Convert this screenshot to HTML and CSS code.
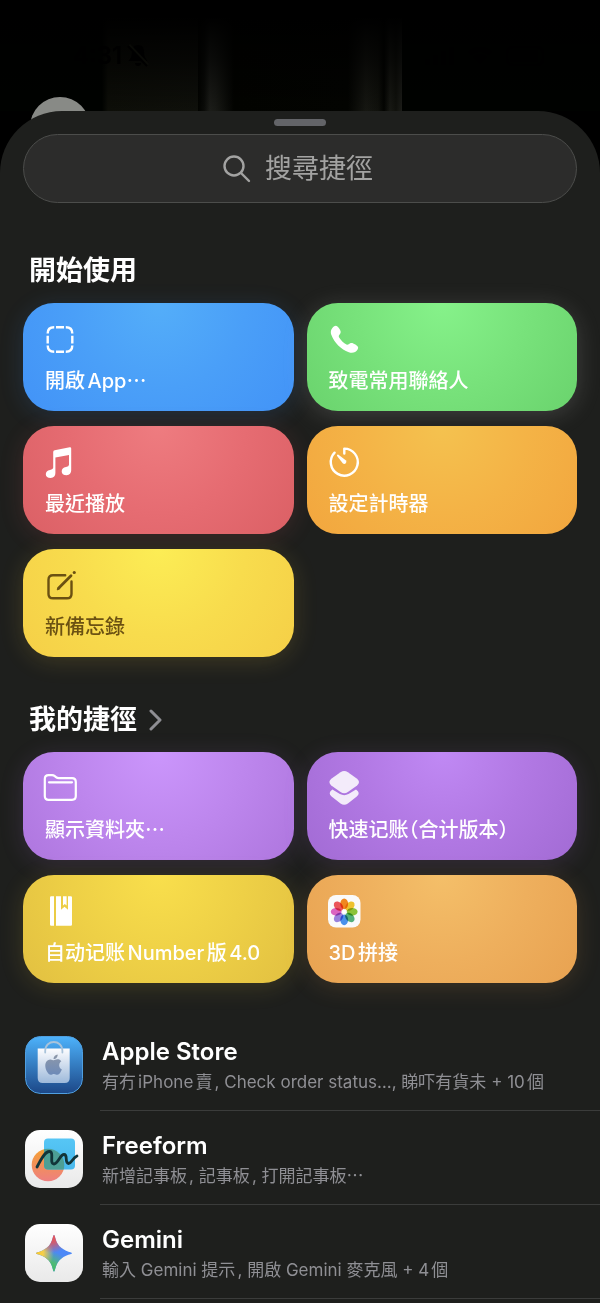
FILE: index.html
```html
<!DOCTYPE html>
<html lang="zh-Hant">
<head>
    <meta charset="UTF-8">
    <meta name="viewport" content="width=device-width, initial-scale=1.0">
    <title>捷徑</title>
    <link rel="stylesheet" href="styles.css">
</head>
<body>
    <div class="backdrop">
        <div class="status-bar">
            <span class="status-time">4:31</span>
            <svg class="bell" viewBox="0 0 22 24" aria-hidden="true">
                <path d="M11 1c-4 0-6 3-6 7 0 5-2 7-3.500 9h19C19 15 17 13 17 8c0-4-2-7-6-7zM8 19h6c0 4-6 4-6 0z"/>
                <path d="M2 1l19 20" fill="none" stroke="#0a0b07" stroke-width="3"/>
                <path d="M1 2l19 20" fill="none" stroke="#000" stroke-width="2"/>
            </svg>
            <svg class="signals" viewBox="0 0 124 20" aria-hidden="true">
                <path d="M0 13h5v6H0zM8 9h5v10H8zM16 5h5v14h-5zM24 1h5v18h-5z"/>
                <path d="M43 6q12-10 24 0l-3 3q-9-7-18 0zM48 11q7-6 14 0l-7 7z"/>
                <rect x="82" y="1" width="36" height="18" rx="6" fill="none" stroke="#000" stroke-width="2"/>
                <rect x="85" y="4" width="28" height="12" rx="3"/>
            </svg>
        </div>
        <div class="avatar"></div>
    </div>

    <main class="sheet">
        <div class="grabber"></div>
        <label class="search">
            <svg viewBox="0 0 28 28" aria-hidden="true">
                <circle cx="11" cy="11" r="9.500"/>
                <path d="M18 18l8 8"/>
            </svg>
            <input type="text" placeholder="搜尋捷徑" aria-label="搜尋捷徑">
        </label>

        <section class="group">
            <h2>開始使用</h2>
            <div class="cards">
                <button class="card blue">
                    <svg viewBox="0 0 32 32" fill="none" stroke="currentColor" stroke-width="2.400" aria-hidden="true">
                        <path d="M11 4.200h8M11 28.800h8M2.700 12.800v7.600M27.300 12.800v7.600"/>
                        <path d="M2.700 10.400C2.700 6 4.600 4.200 9.200 4.200M20.800 4.200c4.600 0 6.500 1.800 6.500 6.200M2.700 22.600c0 4.400 1.900 6.200 6.500 6.200M20.800 28.800c4.600 0 6.500-1.800 6.500-6.200"/>
                    </svg>
                    <span>開啟App<span class="dots">…</span></span>
                </button>
                <button class="card green">
                    <svg viewBox="0 0 32 32" fill="currentColor" aria-hidden="true">
                        <path d="M5.200 3.200C7 1.900 8.600 3 10 5.200c1.600 2.400 2.200 3.700 1.300 5.200-.8 1.400-2.100 2.200-1.300 3.900 1.500 2.700 4.800 6 7.500 7.300 1.500.7 2.300-.6 3.700-1.300 1.500-.8 2.800-.3 5.200 1.300 2.400 1.600 3.600 2.900 2.200 4.900-2 3-5 4.100-8.800 2.700C12 26.300 5.200 19.800 2.400 12 1 8.200 2.400 5.200 5.200 3.200z"/>
                    </svg>
                    <span>致電常用聯絡人</span>
                </button>
                <button class="card red">
                    <svg viewBox="0 0 32 32" fill="currentColor" aria-hidden="true">
                        <path d="M8.200 6q0-1.500 1.500-1.800l15-2.900q1.500-.2 1.500 1.300v21.600q0 4.600-4.600 5-4.900-.1-4.900-3.800 0-3.600 4.300-4.400 3-.5 3-2.200V9L10.400 11.600V27q0 4.500-4.700 5Q.8 31.900.8 28.300q0-3.600 4.200-4.400 3.200-.5 3.200-2.300z"/>
                    </svg>
                    <span>最近播放</span>
                </button>
                <button class="card orange">
                    <svg viewBox="0 0 32 32" aria-hidden="true">
                        <path d="M15.300 7.600V2.600a13.500 13.500 0 1 1-9.700 4.100" fill="none" stroke="currentColor" stroke-width="2.400" stroke-linecap="round" stroke-linejoin="round"/>
                        <path d="M8.300 8.700q.6-.4 1.200 0l7.200 5.500q1.500 1.600.1 3.100-1.500 1.300-3.100-.1L8.100 9.900q-.4-.7.200-1.200z" fill="currentColor"/>
                    </svg>
                    <span>設定計時器</span>
                </button>
                <button class="card yellow">
                    <svg viewBox="0 0 32 32" fill="none" stroke="currentColor" stroke-width="2.400" stroke-linecap="round" aria-hidden="true">
                        <path d="M20.200 6.200H8Q3.500 6.200 3.500 10.700V25Q3.500 29.300 8 29.300H22Q26.500 29.300 26.500 25V12.500"/>
                        <path d="M13.500 19.300L26 6.800" stroke-width="2.800"/>
                        <path d="M12.300 20.600l1.200-2.400 1.100 1.200z" stroke-width="1"/>
                        <path d="M29.200 3.600h.1" stroke-width="3"/>
                    </svg>
                    <span>新備忘錄</span>
                </button>
            </div>
        </section>

        <section class="group">
            <h2>
                <a href="#">我的捷徑
                    <svg class="chevron" viewBox="0 0 14 22" aria-hidden="true"><path d="M2 2l9 9-9 9"/></svg>
                </a>
            </h2>
            <div class="cards">
                <button class="card violet">
                    <svg viewBox="0 0 32 32" fill="none" stroke="currentColor" stroke-width="2.200" stroke-linecap="round" aria-hidden="true">
                        <path d="M-.2 7Q-.2 3.200 3.600 3.200H7q1.600 0 2.800 1l1.200 1q1.200 1 2.800 1H27q3.800 0 3.800 3.800V24q0 3.800-3.800 3.800H3.600Q-.2 27.800-.2 24z"/>
                        <path d="M4 10.300h23"/>
                    </svg>
                    <span>顯示資料夾<span class="dots">…</span></span>
                </button>
                <button class="card purple">
                    <svg viewBox="0 0 32 32" fill="#f3ebfa" aria-hidden="true">
                        <path d="M11.500.3q3.700-2.500 7.400 0l9.200 6.500q3.800 3.300 0 6.600l-9.200 6.500q-3.700 2.500-7.400 0l-9.200-6.500q-3.800-3.300 0-6.600z"/>
                        <path d="M3.400 17.600l7.500 4.500q4.300 2.300 8.600 0l7.500-4.500q5 3.300.8 7l-8.900 6.800q-3.700 2.500-7.400 0l-8.900-6.800q-4.200-3.700.8-7z"/>
                    </svg>
                    <span class="tight" lang="zh-Hans">快速记账（合计版本）</span>
                </button>
                <button class="card gold">
                    <svg viewBox="0 0 32 32" fill="currentColor" aria-hidden="true">
                        <path d="M6.200 1.300H9v29.500H6.200Q5 30.800 5 29.600V2.500q0-1.200 1.200-1.200zM11 1.300h5v13.500l3.500-3 3.500 3V1.300h2.800Q27 1.300 27 2.500v27.100q0 1.200-1.200 1.200H11z"/>
                        <path d="M18 1.300h3.600v9.300l-1.800-1.700L18 10.600z"/>
                    </svg>
                    <span lang="zh-Hans">自动记账Number版4.0</span>
                </button>
                <button class="card apricot">
                    <svg viewBox="0 0 32 32" aria-hidden="true">
                        <rect x="-1" width="32.500" height="32.500" rx="8" fill="#fafafa"/>
                        <g class="petals">
                            <ellipse cx="15.200" cy="8.800" rx="3.900" ry="5.400" fill="#f58a1f"/>
                            <ellipse cx="15.200" cy="8.800" rx="3.900" ry="5.400" fill="#f3c62f" transform="rotate(45 15.200 16.800)"/>
                            <ellipse cx="15.200" cy="8.800" rx="3.900" ry="5.400" fill="#8fc73a" transform="rotate(90 15.200 16.800)"/>
                            <ellipse cx="15.200" cy="8.800" rx="3.900" ry="5.400" fill="#55b37c" transform="rotate(135 15.200 16.800)"/>
                            <ellipse cx="15.200" cy="8.800" rx="3.900" ry="5.400" fill="#4a94f0" transform="rotate(180 15.200 16.800)"/>
                            <ellipse cx="15.200" cy="8.800" rx="3.900" ry="5.400" fill="#9b84e0" transform="rotate(225 15.200 16.800)"/>
                            <ellipse cx="15.200" cy="8.800" rx="3.900" ry="5.400" fill="#e066c4" transform="rotate(270 15.200 16.800)"/>
                            <ellipse cx="15.200" cy="8.800" rx="3.900" ry="5.400" fill="#f0585c" transform="rotate(315 15.200 16.800)"/>
                        </g>
                        <circle cx="15.200" cy="16.800" r="1.800" fill="#fff"/>
                    </svg>
                    <span>3D拼接</span>
                </button>
            </div>
        </section>

        <nav class="apps">
            <a class="app" href="#">
                <svg viewBox="0 0 58 58" aria-hidden="true">
                    <defs>
                        <linearGradient id="store-bg" x2="0" y2="1"><stop stop-color="#4db2fb"/><stop offset="1" stop-color="#1c4787"/></linearGradient>
                        <linearGradient id="store-bag" x2="0" y2="1"><stop stop-color="#fdfdff"/><stop offset="1" stop-color="#9db9da"/></linearGradient>
                        <linearGradient id="store-logo" x2="0" y2="1"><stop stop-color="#8e98a8"/><stop offset="1" stop-color="#6d8ab8"/></linearGradient>
                    </defs>
                    <rect x=".5" y=".5" width="57" height="57" rx="15" fill="url(#store-bg)" stroke="#4f9fe0"/>
                    <path d="M12.700 12.500h32V42q0 5-5 5h-22q-5 0-5-5z" fill="url(#store-bag)"/>
                    <path d="M20.200 16.500V15c0-12 17.200-12 17.200 0v1.500" fill="none" stroke="#a9c3da" stroke-width="1.800" stroke-linecap="round"/>
                    <g transform="translate(18.400 18.400) scale(.85)">
                        <path fill="url(#store-logo)" d="M12.152 6.896c-.948 0-2.415-1.078-3.960-1.040-2.040.027-3.910 1.183-4.961 3.014-2.117 3.675-.546 9.103 1.519 12.090 1.013 1.454 2.208 3.090 3.792 3.039 1.520-.065 2.090-.987 3.935-.987 1.831 0 2.350.987 3.960.948 1.637-.026 2.676-1.480 3.676-2.948 1.156-1.688 1.636-3.325 1.662-3.415-.039-.013-3.182-1.221-3.220-4.857-.026-3.040 2.480-4.494 2.597-4.559-1.429-2.090-3.623-2.324-4.390-2.376-2-.156-3.675 1.090-4.610 1.090zM15.530 3.830c.843-1.012 1.400-2.427 1.245-3.830-1.207.052-2.662.805-3.532 1.818-.780.896-1.454 2.338-1.273 3.714 1.338.104 2.715-.688 3.559-1.701"/>
                    </g>
                </svg>
                <span class="app-text">
                    <strong>Apple Store</strong>
                    <small>有冇iPhone賣, Check order status…, 睇吓有貨未 + 10個</small>
                </span>
            </a>
            <a class="app" href="#">
                <svg viewBox="0 0 58 58" aria-hidden="true">
                    <defs>
                        <linearGradient id="tile" x2="0" y2="1"><stop stop-color="#fff"/><stop offset="1" stop-color="#e9e9e9"/></linearGradient>
                        <linearGradient id="ball" x2="0" y2="1"><stop stop-color="#f5a033"/><stop offset="1" stop-color="#ee7f80"/></linearGradient>
                        <linearGradient id="note" x2="0" y2="1"><stop stop-color="#56c6f5"/><stop offset="1" stop-color="#49b8ec"/></linearGradient>
                        <clipPath id="ball-clip"><circle cx="23" cy="35" r="16.300"/></clipPath>
                    </defs>
                    <rect width="58" height="58" rx="15" fill="url(#tile)"/>
                    <circle cx="23" cy="35" r="16.300" fill="url(#ball)"/>
                    <rect x="19" y="8.500" width="31" height="31" rx="4" fill="url(#note)"/>
                    <rect x="19" y="8.500" width="31" height="31" rx="4" fill="#4d9f95" clip-path="url(#ball-clip)"/>
                    <path d="M12 37c4-8 8-15.500 12.500-15.500 5 0-.5 12.500 4.500 12.500 4 0 6-9.500 10-9.500 4.500 0 0 8.500 4.500 9 3 0 4-5.500 8.500-7.500" fill="none" stroke="#123439" stroke-width="2.800" stroke-linecap="round"/>
                </svg>
                <span class="app-text">
                    <strong>Freeform</strong>
                    <small>新增記事板, 記事板, 打開記事板<span class="dots">…</span></small>
                </span>
            </a>
            <a class="app" href="#">
                <svg viewBox="0 0 58 58" aria-hidden="true">
                    <defs>
                        <radialGradient id="g-red" gradientUnits="userSpaceOnUse" cx="27" cy="12" r="17"><stop stop-color="#f0524f"/><stop offset=".4" stop-color="#f0524f" stop-opacity=".8"/><stop offset="1" stop-color="#f0524f" stop-opacity="0"/></radialGradient>
                        <radialGradient id="g-yellow" gradientUnits="userSpaceOnUse" cx="11" cy="29" r="18"><stop stop-color="#fbc928"/><stop offset=".4" stop-color="#f5cf4a"/><stop offset="1" stop-color="#f5cf4a" stop-opacity="0"/></radialGradient>
                        <radialGradient id="g-green" gradientUnits="userSpaceOnUse" cx="25" cy="46" r="19"><stop stop-color="#3dbb68"/><stop offset=".4" stop-color="#4fbb74"/><stop offset="1" stop-color="#4fbb74" stop-opacity="0"/></radialGradient>
                        <path id="spark" d="M29 11c1 0 1.200 4.500 3.500 8.500 2.200 3.600 5 5.500 8.500 7.200 3.500 1.500 6 1.500 6 2.500s-2.500 1-6 2.500c-3.500 1.700-6.300 3.600-8.500 7.200C30.200 43 30 47.500 29 47.500s-1.200-4.500-3.500-8.600c-2.200-3.600-5-5.500-8.500-7.200-3.500-1.500-6-1.500-6-2.500s2.500-1 6-2.500c3.500-1.700 6.300-3.600 8.500-7.200C27.800 15.500 28 11 29 11z"/>
                    </defs>
                    <rect width="58" height="58" rx="15" fill="url(#tile)"/>
                    <use href="#spark" fill="#4b88f7"/>
                    <use href="#spark" fill="url(#g-green)"/>
                    <use href="#spark" fill="url(#g-yellow)"/>
                    <use href="#spark" fill="url(#g-red)"/>
                </svg>
                <span class="app-text">
                    <strong>Gemini</strong>
                    <small>輸入 Gemini 提示, 開啟 Gemini 麥克風 + 4個</small>
                </span>
            </a>
        </nav>
    </main>
</body>
</html>
```
FILE: styles.css
```css
* {
    box-sizing: border-box;
}
body {
    margin: 0;
    min-height: 100vh;
    display: flex;
    flex-direction: column;
    background-color: #000;
    color: #fff;
    font-family: Inter, "Noto Sans CJK TC", sans-serif;
    text-autospace: normal;
}
[lang="zh-Hans"] {
    font-family: Inter, "Noto Sans CJK SC", sans-serif;
}
button, input {
    font-family: inherit;
}
a {
    color: inherit;
    text-decoration: none;
}

/* dimmed screen behind the sheet */
.backdrop {
    position: relative;
    height: 111px;
    background:
        linear-gradient(to bottom, #000 15%, rgba(0, 0, 0, 0.6) 55%, transparent),
        linear-gradient(to right,
            #000200 17%, #0d0e08 18%, #0f100b 33%, #020300 33%, #0a0b08 34%,
            #1c1d19 35%, #181915 36%, #020300 39%, #030401 58%,
            #161712 61%, #10110c 63%, #030401 64%, #181914 65%, #10110c 66%, #1c1d19 67%, #000200 67%);
}
.status-bar {
    display: flex;
    align-items: center;
    gap: 5px;
    padding: 42px 51px 0 73px;
    color: #000;
    font-size: 24px;
    line-height: 28px;
    font-weight: 600;
}
.bell {
    width: 22px;
    height: 24px;
}
.signals {
    width: 124px;
    height: 20px;
    margin-left: auto;
}
.avatar {
    position: absolute;
    left: 30px;
    top: 97px;
    width: 60px;
    height: 60px;
    border-radius: 50%;
    background-color: #888a86;
}

.sheet {
    position: relative;
    flex: 1;
    padding: 8px 23px 0;
    border-radius: 62px 62px 0 0;
    background-color: #1e1f1d;
}
.grabber {
    width: 52px;
    height: 7px;
    margin: 0 auto 8px;
    border-radius: 4px;
    background-color: #636468;
}
.search {
    display: flex;
    justify-content: center;
    align-items: center;
    gap: 14px;
    height: 69px;
    padding-right: 4px;
    border: 1px solid #4c4d4b;
    border-radius: 35px;
    background-color: #2c2c2b;
}
.search svg {
    width: 28px;
    height: 28px;
    fill: none;
    stroke: #a3a3a2;
    stroke-width: 2.4;
    stroke-linecap: round;
}
.search input {
    width: 4em;
    padding: 0;
    border: none;
    outline: none;
    background: none;
    color: #fff;
    font-size: 27px;
    line-height: 36px;
}
.search input::placeholder {
    color: #a3a3a2;
}

.group {
    margin-top: 45px;
}
.search + .group {
    margin-top: 50px;
}
.group h2 {
    margin: 0 6px 14px;
    font-size: 27px;
    line-height: 36px;
    font-weight: 600;
}
.group h2 a {
    display: flex;
    align-items: center;
    gap: 12px;
}
.chevron {
    width: 14px;
    height: 22px;
    fill: none;
    stroke: #8e8e93;
    stroke-width: 3;
    stroke-linecap: round;
    stroke-linejoin: round;
}
.cards {
    display: grid;
    grid-template-columns: 1fr 1fr;
    gap: 15px 13px;
}
.card {
    display: flex;
    flex-direction: column;
    align-items: flex-start;
    gap: 14px;
    padding: 20px 22px 18px;
    border: none;
    border-radius: 31px;
    color: #fff;
    font-size: 20px;
    line-height: 24px;
    font-weight: 500;
    text-align: left;
    text-autospace: normal;
    cursor: pointer;
}
.card svg {
    width: 32px;
    height: 32px;
    overflow: visible;
}
.dots {
    font-family: "Noto Sans CJK TC", sans-serif;
    line-height: 1;
}
/* half-width brackets */
.tight {
    font-feature-settings: "halt";
}
.petals ellipse {
    mix-blend-mode: multiply;
}
.blue {
    background: radial-gradient(circle at 50% 0, #54aef9, #4a9ff8 50%, #4293f7);
    box-shadow: 0 4px 24px rgba(66, 147, 247, 0.16);
}
.green {
    background: radial-gradient(circle at 50% 0, #86f28a, #78e27b 50%, #6ad36d);
    box-shadow: 0 4px 24px rgba(220, 220, 220, 0.18);
}
.red {
    background: radial-gradient(circle at 50% 0, #ee7c80, #e66c72 50%, #db6065);
    box-shadow: 0 4px 24px rgba(219, 96, 101, 0.16);
}
.orange {
    background: radial-gradient(circle at 50% 0, #f4c24f, #f4b346 50%, #f2a63e);
}
.yellow {
    background: radial-gradient(circle at 50% 0, #fced55, #f8dc4d 50%, #f5cf47);
    box-shadow: 0 4px 24px rgba(245, 207, 71, 0.16);
    color: #6b5112;
}
.violet {
    background: radial-gradient(circle at 50% 0, #cb96fc, #bd86ed 50%, #ae76de);
    box-shadow: 0 4px 24px rgba(174, 118, 222, 0.16);
}
.purple {
    background: radial-gradient(circle at 50% 0, #c089f4, #b178e3 50%, #a26bd4);
    box-shadow: 0 4px 24px rgba(174, 118, 222, 0.16);
}
.gold {
    background: radial-gradient(circle at 50% 0, #f9df4c, #eed046 50%, #e2c041);
    box-shadow: 0 4px 24px rgba(226, 192, 65, 0.16);
}
.apricot {
    background: radial-gradient(circle at 50% 0, #f4bf69, #eeaf5d 50%, #e8a251);
    box-shadow: 0 4px 24px rgba(232, 162, 81, 0.16);
}

.apps {
    margin: 34px -23px 0 0;
}
.app {
    display: flex;
    gap: 17px;
    padding-left: 2px;
}
.app > svg {
    flex: none;
    width: 58px;
    height: 58px;
    margin-top: 19px;
}
.app-text {
    flex: 1;
    height: 94px;
    padding: 20px 0 0 2px;
    border-bottom: 1px solid #3b3c3b;
}
.app-text strong {
    display: block;
    font-size: 24px;
    line-height: 30px;
    font-weight: 600;
}
.app-text small {
    display: block;
    margin-top: 4px;
    color: #8f8f94;
    font-size: 17px;
    line-height: 22px;
}
```
